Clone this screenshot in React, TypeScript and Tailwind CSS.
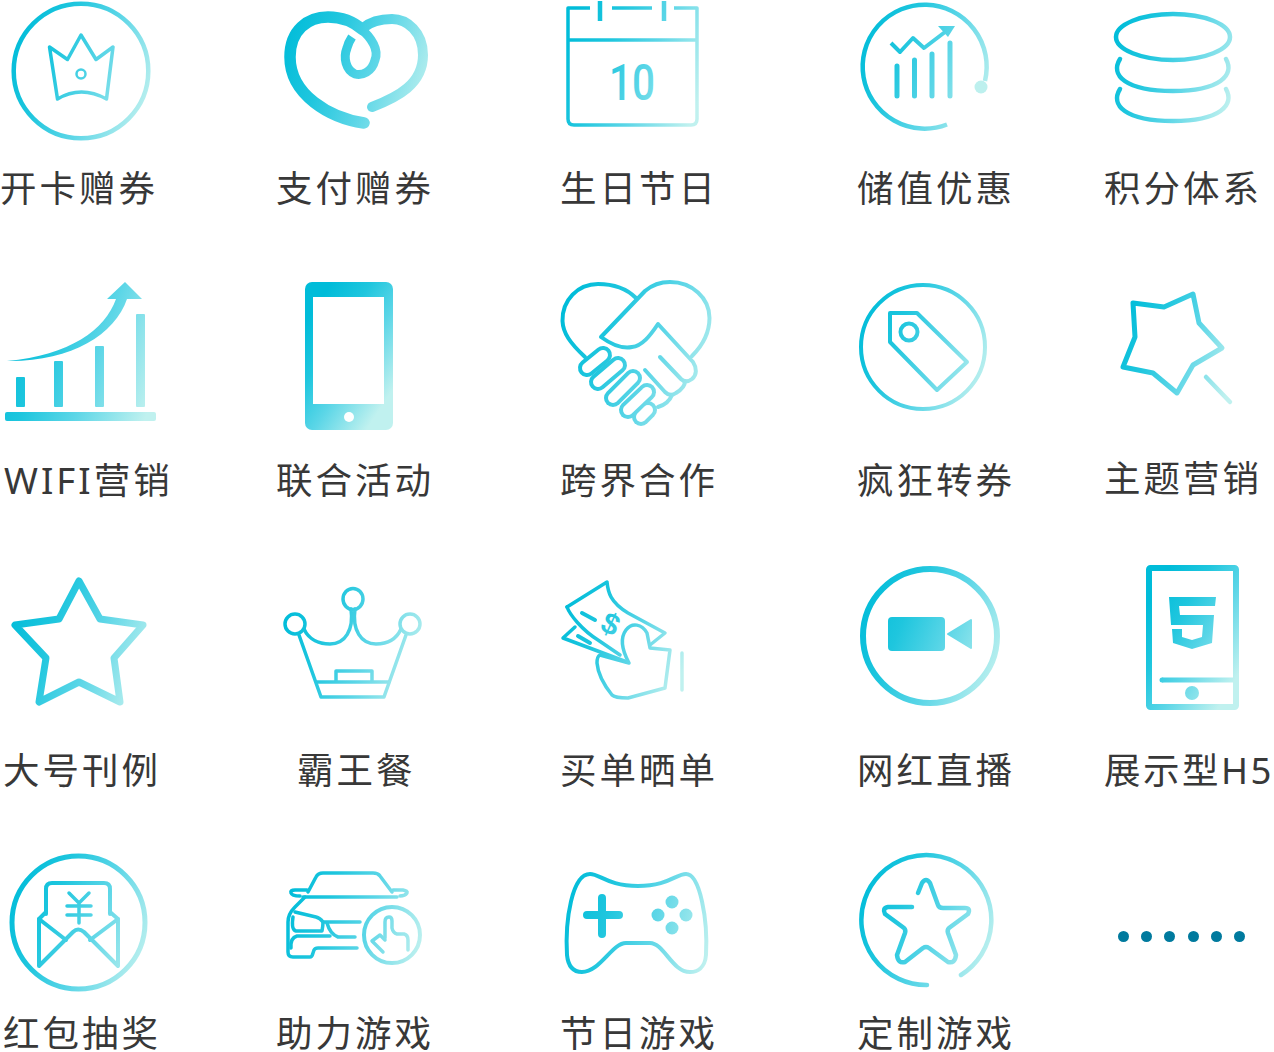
import React from "react";

type IcProps = { id: string; vb: [number, number, number, number]; className?: string; sw?: number; children: React.ReactNode };

function Ic({ id, vb, className, sw = 3, children }: IcProps) {
  const [x, y, w, h] = vb;
  return (
    <svg width={w} height={h} viewBox={`${x} ${y} ${w} ${h}`} className={`block ${className ?? ""}`}>
      <defs>
        <linearGradient id={id} gradientUnits="userSpaceOnUse" x1={x} y1={y + h * 0.3} x2={x + w} y2={y + h * 0.7}>
          <stop offset="0" stopColor="#00bcd9" />
          <stop offset="0.3" stopColor="#1fc6de" />
          <stop offset="0.6" stopColor="#5cd6e7" />
          <stop offset="1" stopColor="#c0f1ef" />
        </linearGradient>
      </defs>
      <g fill="none" stroke={`url(#${id})`} strokeWidth={sw} strokeLinecap="round" strokeLinejoin="round">
        {children}
      </g>
    </svg>
  );
}

const labelBase =
  "whitespace-nowrap text-[36.5px] leading-[36px] text-[#383838] font-['Noto_Sans','Noto_Sans_CJK_SC',sans-serif]";

function Cell({ area, label, labelClass = "tracking-[3px]", icon }: { area: string; label?: string; labelClass?: string; icon: React.ReactNode }) {
  return (
    <div className="flex flex-col">
      <div className={area}>{icon}</div>
      {label ? <div className={`${labelBase} ${labelClass}`}>{label}</div> : null}
    </div>
  );
}

const fingers = (
  <>
    <path d="M641 417 L648 410" />
    <path d="M628 410 L647 392" />
    <path d="M613 398 L633 378" />
    <path d="M598 382 L618 365" />
    <path d="M587 368 L603 355" />
  </>
);

export default function App() {
  return (
    <div className="grid h-[1052px] w-[1274px] grid-cols-[276px_284px_297px_247px_170px] grid-rows-[280px_285px_287px_200px] bg-white">
      {/* Row 1 */}
      <Cell
        area="h-[170px]"
        label="开卡赠券"
        icon={
          <Ic id="a1" vb={[10, 0, 143, 143]} className="ml-[10px]" sw={4.5}>
            <circle cx="81" cy="71" r="67.3" />
            <path strokeWidth="3.5" d="M49.5 47 L67.5 59.5 L81 35 L96 59.5 L113 47 L106.5 99 Q81 85 57.5 99 Z" />
            <circle cx="81" cy="74" r="4.5" strokeWidth="2.5" />
          </Ic>
        }
      />
      <Cell
        area="h-[170px]"
        label="支付赠券"
        icon={
          <Ic id="a2" vb={[280, 4, 152, 128]} className="ml-[4px] mt-[4px]" sw={11.5}>
            <path d="M364 123 C330 118 290 95 290 57 C290 30 308 17 328 17 C342 17 354 22 363 30" />
            <path strokeWidth="9" strokeLinecap="butt" d="M360 28 C372 38 379 50 375 60 C372 72 362 76 355 74 C346 70 343 58 347 48 C348 44 350 40 352 37" />
            <path strokeWidth="10" d="M372 107 C398 97 423 84 423 55 C423 32 407 19 392 19 C380 19 370 22 363 28" />
          </Ic>
        }
      />
      <Cell
        area="h-[170px]"
        label="生日节日"
        icon={
          <Ic id="a3" vb={[564, 0, 138, 130]} className="ml-[4px]" sw={3.5}>
            <path strokeLinecap="butt" d="M590 8 H568 V119 Q568 125 574 125 H691 Q697 125 697 119 V8 H674" />
            <path strokeLinecap="butt" d="M612 8 H652" />
            <path strokeLinecap="butt" d="M568 40 H697" />
            <path strokeLinecap="butt" strokeWidth="4.5" d="M600 1 V21 M664 1 V21" />
            <text x="609" y="100" stroke="none" fill="url(#a3)" textLength="46" lengthAdjust="spacingAndGlyphs" fontFamily="Roboto, sans-serif" fontWeight="500" fontSize="50">
              10
            </text>
          </Ic>
        }
      />
      <Cell
        area="h-[170px]"
        label="储值优惠"
        icon={
          <Ic id="a4" vb={[858, 0, 135, 132]} className="ml-[1px]" sw={4.5}>
            <path d="M947 124.5 A62 62 0 1 1 985 81" strokeLinecap="butt" />
            <circle cx="981" cy="87" r="6.5" fill="#bdf0ee" stroke="none" />
            <path strokeWidth="5" d="M897 66 V96 M914.5 60 V96 M932 54 V96 M950 43 V96" />
            <path strokeWidth="4" strokeLinecap="butt" d="M891 43 L900 52 L913 38 L924 48 L949 29" />
            <path stroke="none" fill="url(#a4)" d="M938 26 H955 L948 37 Z" />
          </Ic>
        }
      />
      <Cell
        area="h-[170px]"
        label="积分体系"
        icon={
          <Ic id="a5" vb={[1110, 8, 126, 118]} className="ml-[6px] mt-[8px]" sw={4.5}>
            <ellipse cx="1173" cy="37" rx="57" ry="23" />
            <path d="M1120 59 C1110 75 1125 91 1173 91 C1220 91 1235 75 1226 59" />
            <path d="M1120 89 C1110 105 1125 121 1173 121 C1220 121 1235 105 1226 89" />
          </Ic>
        }
      />

      {/* Row 2 */}
      <Cell
        area="h-[182px]"
        label="WIFI营销"
        labelClass="ml-[4px] tracking-[3px]"
        icon={
          <Ic id="b1" vb={[2, 280, 157, 144]} className="ml-[2px]">
            <g fill="url(#b1)" stroke="none">
              <rect x="5" y="412" width="151" height="9" rx="2" />
              <rect x="16" y="377" width="9" height="30" rx="1" />
              <rect x="54" y="361" width="9" height="46" rx="1" />
              <rect x="95" y="346" width="9" height="61" rx="1" />
              <rect x="136" y="314" width="9" height="93" rx="1" />
              <path d="M7 361 C70 355 105 330 116 299 H107 L125 282 L142 299 H127 C115 335 70 362 7 361 Z" />
            </g>
          </Ic>
        }
      />
      <Cell
        area="h-[182px]"
        label="联合活动"
        icon={
          <Ic id="b2" vb={[303, 280, 92, 152]} className="ml-[27px]">
            <rect x="305" y="282" width="88" height="148" rx="7" fill="url(#b2)" stroke="none" />
            <rect x="313" y="297" width="71" height="107" fill="#fff" stroke="none" />
            <circle cx="349" cy="417" r="5" fill="#fff" stroke="none" />
          </Ic>
        }
      />
      <Cell
        area="h-[182px]"
        label="跨界合作"
        icon={
          <Ic id="b3" vb={[560, 280, 154, 148]} sw={4}>
            <path d="M585 357 C570 343 563 333 562.5 321 C562 300 578 284 598 284 C614 284 627 289 636 298" />
            <path d="M692 356 C702 346 709.5 333 709.5 318 C709.5 298 692 282 670 282 C660 282 652 285 645 291 L601 337 C612 345 622 349 632 347 C642 346 650 336 658 324 L693 362 C697 368 697 375 692 379 C688 382 684 382 681 379 L660 357" />
            <path d="M685 381 C685 386 681 390 676 393 C672 396 668 395 665 392 L645 370" />
            <path d="M672 395 C670 400 665 405 658 407" />
            <g strokeWidth="18">{fingers}</g>
            <g strokeWidth="10" stroke="#fff">{fingers}</g>
          </Ic>
        }
      />
      <Cell
        area="h-[182px]"
        label="疯狂转券"
        icon={
          <Ic id="b4" vb={[858, 282, 130, 130]} className="ml-[1px] mt-[2px]" sw={4}>
            <circle cx="923" cy="347" r="62" />
            <path d="M890 313 H917 L967 362 L937 390 L890 342 Z" />
            <circle cx="909" cy="332" r="8.5" />
          </Ic>
        }
      />
      <Cell
        area="h-[180px]"
        label="主题营销"
        icon={
          <Ic id="b5" vb={[1118, 288, 118, 118]} className="ml-[14px] mt-[8px]" sw={5}>
            <path d="M1133 303 L1164 307 L1193 294 L1199 323 L1222 348 L1193 365 L1177 393 L1153 373 L1123 367 L1135 337 Z" />
            <path d="M1206 377 L1230 402" strokeWidth="4.5" />
          </Ic>
        }
      />

      {/* Row 3 */}
      <Cell
        area="h-[187px]"
        label="大号刊例"
        labelClass="ml-[3px] tracking-[3px]"
        icon={
          <Ic id="c1" vb={[8, 572, 144, 138]} className="ml-[8px] mt-[7px]" sw={7}>
            <path d="M79 581 L100 619 L143 625 L114 658 L120 702 L79 682 L39 702 L46 658 L15 625 L59 619 Z" />
          </Ic>
        }
      />
      <Cell
        area="h-[187px]"
        label="霸王餐"
        labelClass="ml-[21px] tracking-[3px]"
        icon={
          <Ic id="c2" vb={[282, 585, 142, 116]} className="ml-[6px] mt-[20px]" sw={3.5}>
            <ellipse cx="353" cy="599" rx="10" ry="10.5" />
            <ellipse cx="295" cy="624" rx="10" ry="10" />
            <ellipse cx="410" cy="624" rx="10" ry="10" />
            <path d="M304 629 C309 640 320 644 330 644 C345 644 354 630 351 609" />
            <path d="M401 629 C396 640 386 644 376 644 C361 644 352 630 355 609" />
            <path d="M299 635 L321 697 H384 L406 635" />
            <path d="M317 682 H389" />
            <path d="M336 681 V671 H372 V681" />
          </Ic>
        }
      />
      <Cell
        area="h-[187px]"
        label="买单晒单"
        icon={
          <Ic id="c3" vb={[560, 576, 125, 128]} className="mt-[11px]" sw={3.5}>
            <path d="M567 607 L607 582 C608 592 610 602 628 613 L665 633 L650 645" />
            <path d="M567 607 C570 615 582 630 598 640 L620 655" />
            <path d="M575 627 L563 638 L627 662" />
            <path d="M629 663 C622 650 620 638 626 630 C632 622 642 624 647 633 L650 648 L670 650 L665 688 L628 698 C620 698 614 697 612 695 C604 685 598 675 597 663 C597 658 598 656 600 655 L629 663" />
            <path d="M682 653 V690" strokeWidth="3.5" />
            <path d="M582 613 L595 620 M578 636 L590 643" strokeWidth="4" />
            <text x="602" y="635" stroke="none" fill="url(#c3)" fontFamily="'Liberation Sans', sans-serif" fontWeight="700" fontSize="30" transform="rotate(25 612 625)">
              $
            </text>
          </Ic>
        }
      />
      <Cell
        area="h-[187px]"
        label="网红直播"
        icon={
          <Ic id="c4" vb={[858, 565, 144, 142]} className="ml-[1px]" sw={6}>
            <circle cx="930" cy="636" r="67" />
            <rect x="888" y="617" width="57" height="34" rx="4" fill="url(#c4)" stroke="none" />
            <path d="M948 634 L971 620 V648 Z" fill="url(#c4)" strokeWidth="2" />
          </Ic>
        }
      />
      <Cell
        area="h-[187px]"
        label="展示型H5"
        labelClass="tracking-[2.5px]"
        icon={
          <Ic id="c5" vb={[1144, 565, 98, 147]} className="ml-[40px]" sw={6}>
            <rect x="1149" y="568" width="87" height="139" rx="1.5" />
            <path strokeWidth="5" d="M1162 680 H1234" strokeLinecap="butt" />
            <circle cx="1162" cy="680" r="2.5" fill="url(#c5)" stroke="none" />
            <circle cx="1192" cy="693" r="7" fill="url(#c5)" stroke="none" />
            <path
              stroke="none"
              fill="url(#c5)"
              d="M1169 597 H1216 L1215 606 H1179 L1180 615 H1214 L1212 643 L1192 649 L1173 643 L1172 629 H1182 L1182 637 L1192 640 L1202 637 L1203 625 H1171 Z"
            />
          </Ic>
        }
      />

      {/* Row 4 */}
      <Cell
        area="h-[163px]"
        label="红包抽奖"
        labelClass="ml-[3px] tracking-[3px]"
        icon={
          <Ic id="d1" vb={[8, 852, 142, 142]} className="ml-[8px]" sw={4}>
            <circle cx="78.5" cy="922.5" r="66.5" strokeWidth="5" />
            <path d="M46 914 V889 Q46 883 52 883 H104 Q110 883 110 889 V914" />
            <path d="M46 912 L39 919 V966 L73 932 Q78 927 84 932 L118 966 V919 L110 912" />
            <path d="M39 919 L66 940 M118 919 L90 940" />
            <path strokeWidth="3.5" d="M69 893 L79 903 L89 893 M79 903 V923 M67 906 H91 M67 915 H91" />
          </Ic>
        }
      />
      <Cell
        area="h-[163px]"
        label="助力游戏"
        icon={
          <Ic id="d2" vb={[285, 868, 140, 100]} className="ml-[9px] mt-[16px]" sw={3.5}>
            <path d="M308 892 L316 877 Q318 873 323 873 H373 Q378 873 380 876 L392 892" />
            <path d="M307 890 H295 Q290 890 291 893 Q292 896 300 896 M393 890 H403 Q408 891 407 893 Q405 896 400 896" />
            <path d="M303 897 H397" />
            <path d="M305 897 L295 907 Q288 914 288 922 V952 Q288 957 293 957 H310 Q312 957 313 953 L314 950 Q315 948 318 948 H357" />
            <path d="M295 912 L316 917 Q320 918 323 922 H360" />
            <path d="M293 917 Q291 930 296 931 H322 Q323 926 323 922" />
            <path d="M327 923 Q330 934 338 937 H355" />
            <path d="M297 936 H330 M297 936 Q290 938 291 948" />
            <circle cx="392" cy="935" r="28" strokeWidth="4" />
            <path strokeWidth="3.5" d="M385 938 V922 Q385 917 389 917 Q392 917 392 921 V928 Q393 933 397 934 H404 Q408 935 408 940 V950" />
            <path strokeWidth="3.5" d="M385 940 L380 935 L372 941 L383 952" />
          </Ic>
        }
      />
      <Cell
        area="h-[163px]"
        label="节日游戏"
        icon={
          <Ic id="d3" vb={[562, 870, 150, 105]} className="ml-[2px] mt-[18px]" sw={4}>
            <path d="M590 874 C600 874 608 886 638 886 C668 886 676 874 686 874 C700 874 708 920 706 955 C705 968 697 972 690 972 C672 972 664 943 650 943 H626 C612 943 600 972 582 972 C572 972 568 965 567 955 C565 920 572 874 590 874 Z" />
            <path strokeWidth="8" d="M602 898 V934 M587 915 H619" />
            <g fill="url(#d3)" stroke="none">
              <circle cx="672" cy="902" r="6.5" />
              <circle cx="658" cy="915" r="6.5" />
              <circle cx="686" cy="915" r="6.5" />
              <circle cx="672" cy="928" r="6.5" />
            </g>
          </Ic>
        }
      />
      <Cell
        area="h-[163px]"
        label="定制游戏"
        icon={
          <Ic id="d4" vb={[858, 852, 136, 136]} className="ml-[1px]" sw={4.5}>
            <path d="M927 985 A65 65 0 1 1 961 975" />
            <path d="M918 893 L922 883 Q926 877 930 883 L938 905 Q939 908 943 908 H965 Q971 908 968 914 L949 928 Q947 930 948 933 L956 955 Q955 964 948 962 L929 948 Q926 946 923 948 L905 962 Q898 964 897 955 L905 933 Q906 930 904 928 L885 914 Q882 908 888 907 H912" />
          </Ic>
        }
      />
      <div className="ml-[14px] mt-[79px] flex gap-[12.2px]">
        <div className="h-[11px] w-[11px] rounded-full bg-[#007a9e]" />
        <div className="h-[11px] w-[11px] rounded-full bg-[#007a9e]" />
        <div className="h-[11px] w-[11px] rounded-full bg-[#007a9e]" />
        <div className="h-[11px] w-[11px] rounded-full bg-[#007a9e]" />
        <div className="h-[11px] w-[11px] rounded-full bg-[#007a9e]" />
        <div className="h-[11px] w-[11px] rounded-full bg-[#007a9e]" />
      </div>
    </div>
  );
}
